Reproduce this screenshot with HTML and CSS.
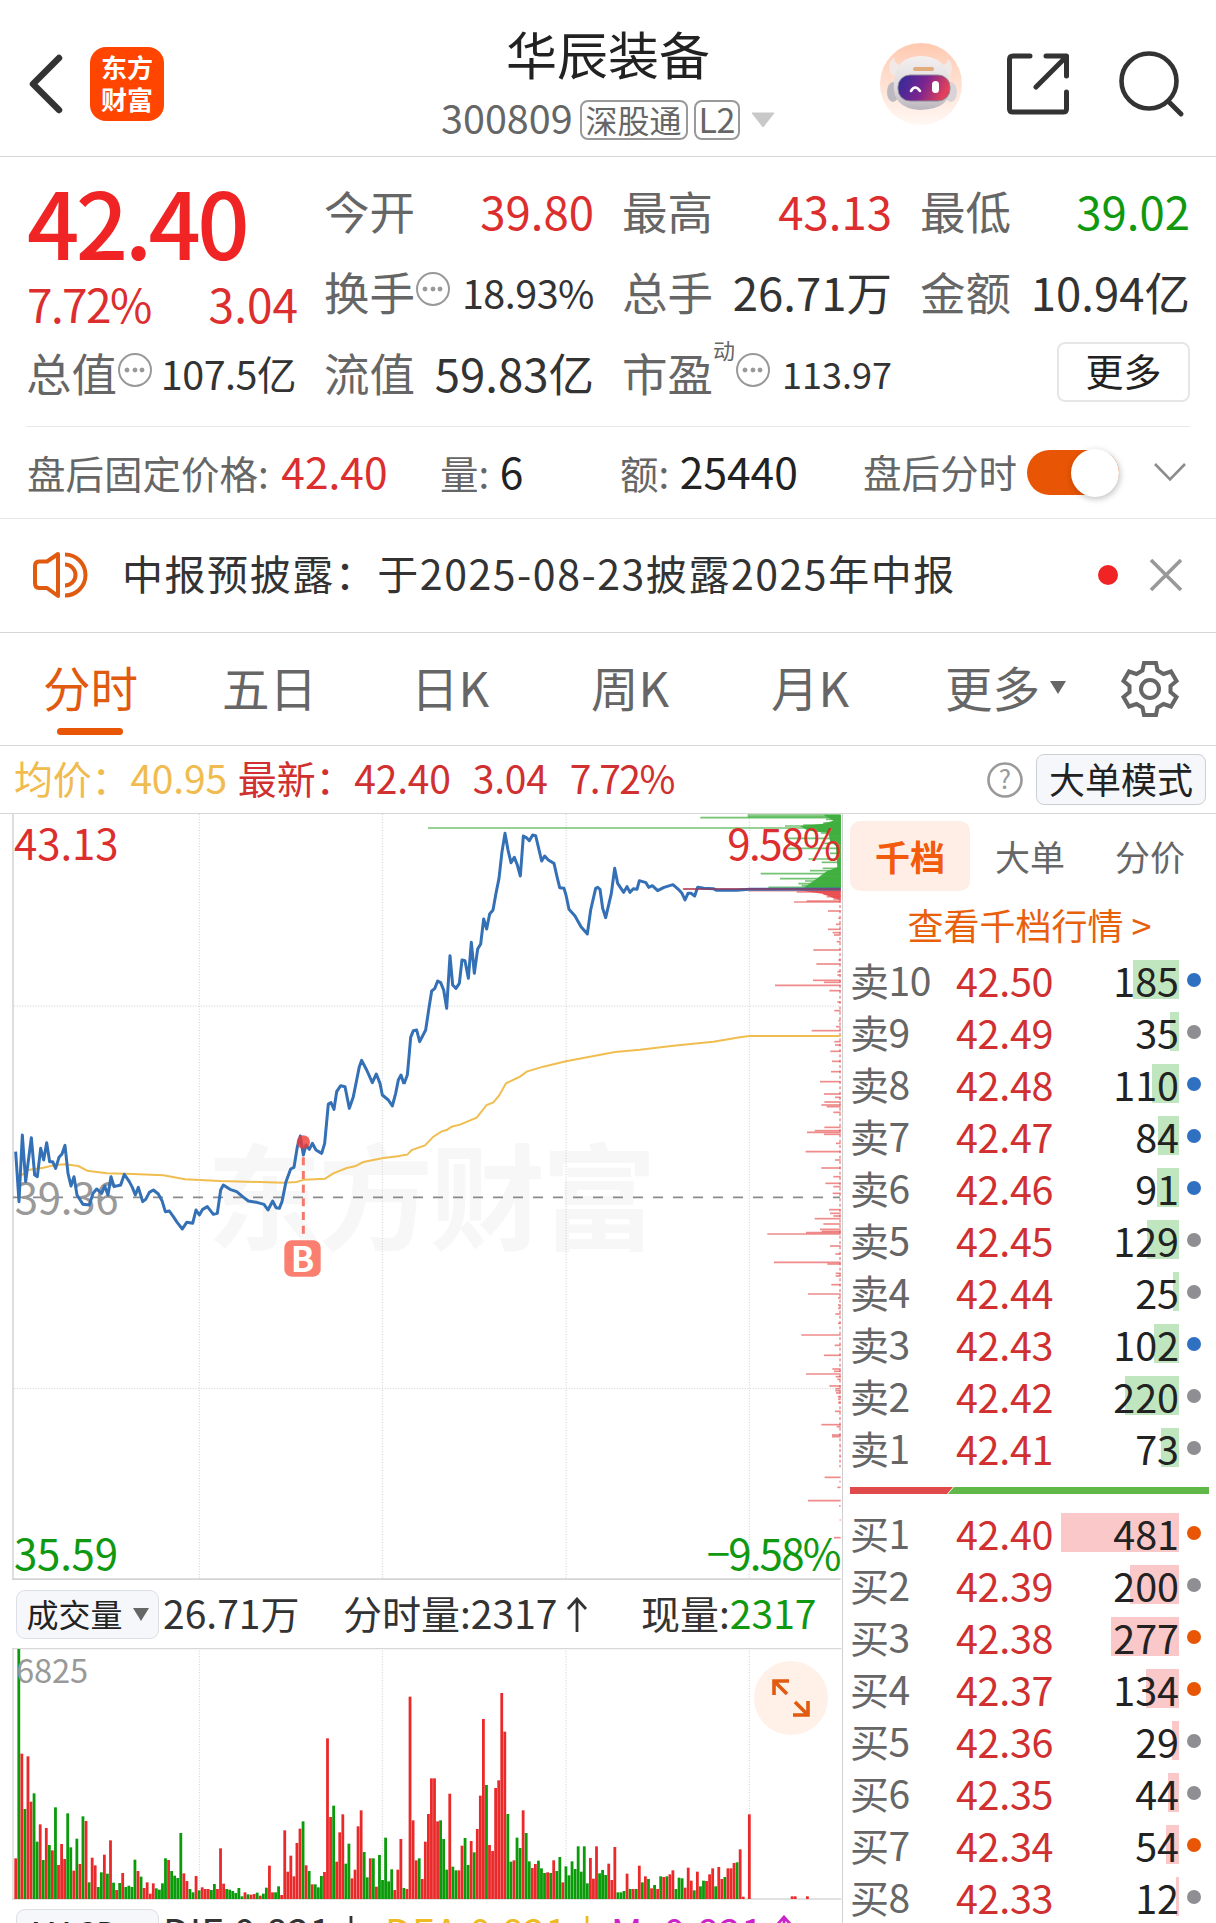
FILE: index.html
```html
<!DOCTYPE html>
<html lang="zh-CN">
<head>
    <meta charset="UTF-8">
    <meta name="viewport" content="width=device-width, initial-scale=1.0">
    <title>华辰装备 300809</title>
    <link rel="stylesheet" href="styles.css">
</head>
<body>
    <header class="topbar">
        <div class="topbar-left">
            <svg class="back" width="40" height="64" viewBox="0 0 40 64"><path d="M35 6 L9 32 L35 58" fill="none" stroke="#333" stroke-width="6.5" stroke-linecap="round" stroke-linejoin="round"/></svg>
            <div class="logo"><span>东方</span><span>财富</span></div>
        </div>
        <div class="topbar-title">
            <h1>华辰装备</h1>
            <div class="code-line">
                <span class="code">300809</span>
                <span class="badge">深股通</span>
                <span class="badge badge-l2">L2</span>
                <svg width="24" height="16" viewBox="0 0 24 16"><path d="M1 1 H23 L12 15 Z" fill="#c8c8c8" stroke="#c8c8c8" stroke-linejoin="round"/></svg>
            </div>
        </div>
        <div class="topbar-right">
            <svg width="82" height="84" viewBox="0 0 82 84">
                <defs>
                    <linearGradient id="peach" x1="0" y1="0" x2="0" y2="1"><stop offset="0" stop-color="#ffc9b0"/><stop offset="1" stop-color="#fff8f4"/></linearGradient>
                    <linearGradient id="visor" x1="0" y1="0" x2="1" y2="0.25"><stop offset="0" stop-color="#2a2c9c"/><stop offset="0.55" stop-color="#7a2490"/><stop offset="1" stop-color="#e0405a"/></linearGradient>
                    <linearGradient id="shell" x1="0" y1="0" x2="0" y2="1"><stop offset="0" stop-color="#f4f0f0"/><stop offset="0.6" stop-color="#dedadd"/><stop offset="1" stop-color="#b9b5bc"/></linearGradient>
                </defs>
                <circle cx="41" cy="42" r="41" fill="url(#peach)"/>
                <path d="M14 15 Q7 22 10 30 Q13 36 20 32 L23 24 Q14 23 14 15 Z M68 17 Q74 22 71 31 Q68 36 62 32 L59 24 Q67 24 68 17 Z" fill="#f1e9e8"/>
                <ellipse cx="13" cy="50" rx="6" ry="10" fill="#bdb9c0"/>
                <ellipse cx="71" cy="50" rx="6" ry="10" fill="#d9d3d8"/>
                <path d="M14 40 Q16 14 41 14 Q66 14 70 40 Q74 67 40 68 Q11 66 14 40 Z" fill="url(#shell)"/>
                <rect x="18" y="33" width="52" height="26" rx="12" fill="url(#visor)" stroke="#8d8798" stroke-width="1"/>
                <rect x="33" y="25" width="21" height="4" rx="2" fill="#e3ac7c"/>
                <path d="M31 49 Q35 42 40 49" fill="none" stroke="#fff" stroke-width="2.6" stroke-linecap="round"/>
                <rect x="52" y="39" width="7" height="12" rx="3.5" fill="#fff"/>
            </svg>
            <svg class="share" width="62" height="64" viewBox="0 0 62 64"><path d="M23 4 H6 Q2.500 4 2.500 7.500 V57 Q2.500 60 6 60 H56 Q59.500 60 59.500 57 V40 M39 4 H59.500 V24 M59 5 L29 35" fill="none" stroke="#333" stroke-width="5" stroke-linecap="round" stroke-linejoin="round"/></svg>
            <svg width="66" height="66" viewBox="0 0 66 66"><circle cx="30" cy="30" r="27.500" fill="none" stroke="#333" stroke-width="4.600"/><path d="M49.500 50.500 L62 63" stroke="#333" stroke-width="4.800" stroke-linecap="round"/></svg>
        </div>
    </header>

    <section class="quote">
        <div class="quote-grid">
            <div class="last">
                <div class="last-price">42.40</div>
                <div class="last-change"><span>7.72%</span><span>3.04</span></div>
            </div>
            <div class="cell"><span class="label">今开</span><span class="value up">39.80</span></div>
            <div class="cell"><span class="label">最高</span><span class="value up">43.13</span></div>
            <div class="cell"><span class="label">最低</span><span class="value down">39.02</span></div>
            <div class="cell"><span class="label">换手<i class="dots"></i></span><span class="value mid">18.93%</span></div>
            <div class="cell"><span class="label">总手</span><span class="value">26.71万</span></div>
            <div class="cell"><span class="label">金额</span><span class="value">10.94亿</span></div>
            <div class="cell"><span class="label">总值<i class="dots"></i></span><span class="value mid">107.5亿</span></div>
            <div class="cell"><span class="label">流值</span><span class="value">59.83亿</span></div>
            <div class="cell"><span class="label">市盈<sup>动</sup><i class="dots"></i></span><span class="value small">113.97</span></div>
            <div class="cell cell-more"><button class="more-btn">更多</button></div>
        </div>
        <div class="after-hours">
            <div class="ah-price">盘后固定价格: <b class="up">42.40</b></div>
            <div class="ah-vol">量: <b>6</b></div>
            <div class="ah-amount">额: <b>25440</b></div>
            <div class="ah-switch">盘后分时<span class="toggle"></span></div>
            <svg width="34" height="20" viewBox="0 0 34 20"><path d="M2 2 L17 17.500 L32 2" fill="none" stroke="#8c8c8c" stroke-width="2.600"/></svg>
        </div>
    </section>

    <section class="notice">
        <svg width="56" height="48" viewBox="0 0 56 48" fill="none" stroke="#e05a10" stroke-width="4" stroke-linejoin="round"><path d="M26 3 L15 10.500 H7 Q3 10.500 3 15 V32 Q3 37 7 37 H15 L26 45 Z"/><path d="M33 13.500 A10.500 10.500 0 0 1 33 34.500 M33 3.500 A20.500 20.500 0 0 1 33 44.500"/></svg>
        <p>中报预披露：于2025-08-23披露2025年中报</p>
        <span class="red-dot"></span>
        <svg width="34" height="34" viewBox="0 0 34 34"><path d="M2 2 L32 32 M32 2 L2 32" stroke="#999" stroke-width="3.600"/></svg>
    </section>

    <nav class="tabs">
        <a class="tab active">分时</a>
        <a class="tab">五日</a>
        <a class="tab">日K</a>
        <a class="tab">周K</a>
        <a class="tab">月K</a>
        <a class="tab tab-more">更多<i class="caret"></i></a>
        <svg class="gear" width="58" height="58" viewBox="0 0 58 58" fill="none" stroke="#666" stroke-width="4"><path d="M23 3 H35 L36.500 10.500 L42.500 14 L50 11.500 L55.500 21 L49.500 26 V32 L55.500 37 L50 46.500 L42.500 44 L36.500 47.500 L35 55 H23 L21.500 47.500 L15.500 44 L8 46.500 L2.500 37 L8.500 32 V26 L2.500 21 L8 11.500 L15.500 14 L21.500 10.500 Z"/><circle cx="29" cy="29" r="9"/></svg>
    </nav>

    <div class="price-line">
        <span class="avg">均价：<em>40.95</em></span>
        <span class="now">最新：<em>42.40</em><em>3.04</em><em class="pct">7.72%</em></span>
        <svg width="36" height="36" viewBox="0 0 36 36"><circle cx="18" cy="18" r="16.500" fill="none" stroke="#999" stroke-width="2.600"/><text x="18" y="27" text-anchor="middle" font-size="26" fill="#999">?</text></svg>
        <button class="mode-btn">大单模式</button>
    </div>

    <main class="board">
        <div class="charts">
            <!-- 3 chart units per pixel -->
            <svg class="minute-chart" width="843" height="766" viewBox="0 0 2529 2298">
                <text class="watermark" x="620" y="1280" textLength="1350">东方财富</text>
                <g class="grid">
                    <path d="M598 0 V2295 M1147 0 V2295 M1698 0 V2295 M2248 0 V2295 M42 576 H2520 M42 1724 H2520"/>
                </g>
                <path d="M39 0 V2295" stroke="#d8d8d8" stroke-width="5"/>
                <path d="M36 2296 H2522" stroke="#d4d4d4" stroke-width="6"/>
                <g id="depth"></g>
                <path d="M39 1150 H2520" class="zero-line"/>
                <g class="avg-line">
                    <polyline transform="translate(0 798)" points="57,292 85,270 130,263 165,255 195,253 235,258 262,272 320,280 400,282 490,286 555,298 660,303 780,306 850,308 890,306 912,299 975,296 1000,280 1040,264 1065,259 1090,246 1150,234 1200,228"/>
                    <polyline transform="translate(1200 -42)" points="0,1067 22,1064 35,1050 75,1036 100,1010 125,994 140,990 155,980 180,974 230,953 260,915 280,907 297,887 318,850 360,830 380,815 430,800 498,784 645,756 720,749 820,737 940,725 1020,712 1048,708 1322,708"/>
                </g>
                <text class="axis muted" x="44" y="1199" textLength="312">39.36</text>
                <g class="price-path">
                    <polyline transform="translate(0 798)" points="47,215 57,365 67,165 77,305 94,173 104,285 112,290 122,205 131,240 140,188 149,245 158,245 167,265 177,232 186,222 195,196 204,280 213,318 222,290 231,345 249,373 268,375 279,340 290,327 305,340 314,318 324,345 333,290 342,320 362,315 373,283 388,305 397,322 406,345 415,322 428,365 437,358 448,337 460,330 475,342 486,362 496,395 508,393 520,410 532,428 547,447 560,427 578,430 588,390 598,405 608,388 622,380 640,403 652,400 662,330 670,315 690,328 710,335 728,350 745,363 770,367 792,373 804,390 818,363 828,383 838,385 846,365 858,305 872,267 882,262 892,200 901,168 910,225 918,195 928,208 937,190 948,210 965,220 974,190 985,72 993,68 1002,88 1010,35 1022,17 1035,20 1048,85 1060,50 1070,0 1078,-40 1085,-59 1100,-30 1117,8 1129,-18 1140,10 1147,45 1165,60 1177,78 1187,40 1195,0 1203,-15 1212,12"/>
                    <polyline transform="translate(1200 -42)" points="12,852 22,825 27,770 32,712 40,692 50,690 59,725 77,690 86,630 95,573 104,566 113,543 122,548 131,570 140,625 150,467 158,555 168,565 178,550 186,480 195,482 205,535 214,427 223,520 233,447 242,432 251,357 260,387 269,342 279,330 288,280 297,235 306,155 315,100 324,150 333,188 343,172 352,195 361,228 370,108 379,113 388,122 398,105 407,107 416,145 425,183 434,168 445,180 462,190 471,230 479,263 492,265 498,285 507,328 525,348 543,380 562,402 572,330 587,265 593,262 600,268 608,325 617,353 634,280 644,205 653,250 671,277 681,260 690,277 700,266 711,268 718,242 738,248 746,262 757,257 773,272 792,262 819,254 835,268 846,280 855,300 864,280 873,280 884,288 893,262 912,265 940,266 950,271 1010,271 1048,268 1322,267"/>
                </g>
                <path d="M2050 225 H2522" stroke="#a03050" stroke-width="4" opacity="0.8"/>
                <path d="M910 1030 V1262" stroke="#f4786c" stroke-width="9" stroke-dasharray="24 17"/>
                <circle cx="910" cy="984" r="20" fill="#f03a34" opacity="0.8"/>
                <rect x="853" y="1279" width="109" height="109" rx="22" fill="#fb7f70"/>
                <text class="buy-mark" x="908" y="1374" text-anchor="middle">B</text>
                <text class="axis up" x="42" y="138" textLength="314">43.13</text>
                <text class="axis up" x="2182" y="138" textLength="342">9.58%</text>
                <text class="axis down" x="42" y="2268" textLength="312">35.59</text>
                <text class="axis down" x="2120" y="2268" textLength="404">−9.58%</text>
            </svg>

            <div class="vol-head">
                <button class="pill">成交量<i class="caret"></i></button>
                <span class="vol-total">26.71万</span>
                <span class="vol-minute">分时量:2317<svg width="22" height="36" viewBox="0 0 22 36"><path d="M11 35 V2 M2 12 L11 2 L20 12" fill="none" stroke="#333" stroke-width="2.800"/></svg></span>
                <span class="vol-now">现量:<em class="down">2317</em></span>
            </div>

            <div class="vol-box">
                <svg class="vol-chart" width="843" height="253" viewBox="0 0 2529 759">
                    <g class="grid"><path d="M598 0 V750 M1147 0 V750 M1698 0 V750 M2248 0 V750"/></g>
                    <path d="M36 2 H2524 M39 0 V754 M36 753 H2524" fill="none" stroke="#d8d8d8" stroke-width="4"/>
                    <g id="volume"></g>
                    <text class="vol-max" x="48" y="105" textLength="216">6825</text>
                </svg>
                <button class="expand">
                    <svg width="38" height="38" viewBox="0 0 38 38" fill="none" stroke="#e05a10" stroke-width="3.600"><path d="M2 16 V2 H17 M3 3 L15 15 M36 22 V36 H21 M35 35 L23 23"/></svg>
                </button>
            </div>

            <div class="macd-head">
                <button class="pill">MACD<i class="caret"></i></button>
                <span>DIF:0.821<svg width="20" height="36" viewBox="0 0 20 36"><path d="M10 1 V34 M2 25 L10 34 L18 25" fill="none" stroke="#333" stroke-width="2.800"/></svg></span>
                <span class="dea">DEA:0.821<svg width="20" height="36" viewBox="0 0 20 36"><path d="M10 1 V34 M2 25 L10 34 L18 25" fill="none" stroke="#eebb22" stroke-width="2.800"/></svg></span>
                <span class="m">M: 0.821<svg width="20" height="36" viewBox="0 0 20 36"><path d="M10 35 V2 M2 11 L10 2 L18 11" fill="none" stroke="#cc22cc" stroke-width="2.800"/></svg></span>
            </div>
        </div>

        <aside class="book">
            <div class="book-tabs">
                <a class="active">千档</a>
                <a>大单</a>
                <a>分价</a>
            </div>
            <a class="book-link">查看千档行情 &gt;</a>
            <div id="sells"></div>
            <svg class="ratio" width="359" height="7" viewBox="0 0 359 7"><path d="M0 0 H103 L97 7 H0 Z" fill="#e04a4a"/><path d="M104 0 H359 V7 H98 Z" fill="#5fb848"/></svg>
            <div id="buys"></div>
        </aside>
    </main>

    <script>
        // [level, price, volume, dot colour]
        const sells = [
            ['卖10', '42.50', 185, 'blue'], ['卖9', '42.49', 35, 'gray'], ['卖8', '42.48', 110, 'blue'],
            ['卖7', '42.47', 84, 'blue'], ['卖6', '42.46', 91, 'blue'], ['卖5', '42.45', 129, 'gray'],
            ['卖4', '42.44', 25, 'gray'], ['卖3', '42.43', 102, 'blue'], ['卖2', '42.42', 220, 'gray'],
            ['卖1', '42.41', 73, 'gray']
        ];
        const buys = [
            ['买1', '42.40', 481, 'orange'], ['买2', '42.39', 200, 'gray'], ['买3', '42.38', 277, 'orange'],
            ['买4', '42.37', 134, 'orange'], ['买5', '42.36', 29, 'gray'], ['买6', '42.35', 44, 'gray'],
            ['买7', '42.34', 54, 'orange'], ['买8', '42.33', 12, 'gray']
        ];

        function renderBook(id, rows, side) {
            document.getElementById(id).innerHTML = rows.map(([level, price, vol, dot]) => `
                <div class="book-row">
                    <span class="level">${level}</span>
                    <span class="price">${price}</span>
                    <span class="vol ${side}"><i style="width:${Math.round(vol * 0.246)}px"></i><b>${vol}</b></span>
                    <span class="dot ${dot}"></span>
                </div>`).join('');
        }
        renderBook('sells', sells, 'sell');
        renderBook('buys', buys, 'buy');

        // Resting orders by price: [y, length]
        const asks = [[3,279],[8,279],[11,421],[16,44],[27,52],[33,112],[36,167],[42,1238],[46,82],[51,82],[57,60],[62,42],[73,162],[81,32],[88,52],[103,162],[118,32],[135,97],[145,57],[163,54],[170,92],[179,240],[194,182],[201,107],[209,127],[215,117],[220,217]];
        const bids = [[225,474],[230,277],[234,132],[241,52],[248,42],[255,22],[261,102],[264,140],[291,38],[313,7],[331,14],[346,38],[356,24],[363,20],[383,12],[408,82],[438,7],[450,73],[473,10],[483,10],[499,83],[505,50],[514,197],[530,34],[564,10],[590,19],[620,7],[638,14],[650,87],[683,19],[693,17],[712,31],[742,26],[773,29],[803,62],[840,50],[850,17],[864,49],[873,58],[878,42],[895,22],[940,49],[950,78],[955,101],[961,50],[988,14],[1013,105],[1038,17],[1062,58],[1088,22],[1108,46],[1118,22],[1138,24],[1187,35],[1198,32],[1206,22],[1214,78],[1230,52],[1246,62],[1252,57],[1256,104],[1260,220],[1296,32],[1320,16],[1345,200],[1350,40],[1378,15],[1386,15],[1412,28],[1440,98],[1452,8],[1473,8],[1483,8],[1500,16],[1528,8],[1563,118],[1594,18],[1624,50],[1665,25],[1672,20],[1680,104],[1688,15],[1696,10],[1716,34],[1724,16],[1730,16],[1737,14],[1748,9],[1756,8],[1766,8],[1792,17],[1832,58],[1838,12],[1863,26],[1868,26],[1898,3],[1928,3],[1990,48],[2003,4],[2020,10],[2060,98],[2076,5],[2118,3],[2171,20]];
        const depthBar = (color, opacity) => ([y, len]) =>
            `<path d="M${2522 - len} ${y} H2522" stroke="${color}" stroke-width="5" opacity="${opacity}"/>`;
        document.getElementById('depth').innerHTML =
            '<path d="M2520 3 V222" stroke="#3fb03f" stroke-width="5"/>' +
            '<path d="M2520 225 V1960" stroke="#e06060" stroke-width="3" stroke-dasharray="9 7"/>' +
            // the dense part on both sides of the last price
            '<path d="M2522 2 H2470 L2500 20 L2465 30 L2400 36 L2425 50 L2485 56 L2490 80 L2508 96 L2512 160 L2480 172 L2450 194 L2430 208 L2410 222 H2522 Z" fill="#43b243"/>' +
            '<path d="M2522 226 H2380 L2470 240 L2500 252 L2522 258 Z" fill="#ee5c5c"/>' +
            asks.map(depthBar('#3fae3f', 0.72)).join('') + bids.map(depthBar('#e64545', 0.62)).join('');

        // One bar a minute, r = up, g = down
        const volumes = ('r122 g750 r436 g270 r428 r292 g317 g172 r224 g117 r213 g162 r146 g275 r102 r165 r120 g257 g155 r85 ' +
            'g181 r105 g248 r234 g50 r124 r101 g36 g80 r133 g76 r176 g49 r27 g48 r78 g36 g40 g36 g118 ' +
            'r84 g67 r33 r50 r16 r47 g32 g28 g47 g122 r117 g84 g70 g63 g198 r77 r54 g30 g20 r69 ' +
            'g26 r35 r30 r30 g27 g45 r30 r152 r46 g30 g28 g24 g18 g33 g8 r20 g14 r13 r15 g19 ' +
            'r10 g16 g34 r100 r20 g20 g38 r12 r206 r82 r130 r68 r168 r211 g233 r101 g84 r44 g44 g35 ' +
            'g69 r81 r482 r246 g280 r112 r200 r254 g106 g166 r62 r88 r218 r266 g141 g65 r122 g122 r37 g132 ' +
            'g57 g184 g53 g89 r27 r88 r180 g33 r30 r607 r236 r116 g122 r60 r172 r255 r362 r362 r233 g236 ' +
            'g180 g88 r316 g97 g86 r86 r160 g183 g102 r174 g140 r210 r310 r540 g342 r162 r144 r333 r356 r618 ' +
            'r502 g255 g112 r116 g184 g153 r266 g198 g113 r93 r105 g115 g92 g78 r80 g78 r116 g84 g126 r50 ' +
            'g98 g71 g113 g90 g158 g82 g158 g47 r123 r61 r158 g77 g87 g72 r106 r57 r156 g20 g20 g24 ' +
            'r76 g30 r30 g30 r100 g50 r68 g60 r32 g42 r30 g68 r66 g68 r74 r86 g30 g64 g62 r34 ' +
            'r94 r55 g26 r82 g38 g55 r54 r74 r92 g38 r96 r60 g66 r92 r92 r108 g110 r149 r7 r0 ' +
            'r254 r0 r0 r0 r0 r0 r0 r0 r0 r0 r0 r0 r0 r0 r8 r8 r0 r0 r0 r8').split(' ');
        document.getElementById('volume').innerHTML = volumes.map((v, i) => {
            const h = Number(v.slice(1));
            const fill = v[0] === 'r' ? '#ea2a2a' : '#0a9a0a';
            return `<rect x="${(43 + i * 9.17).toFixed(1)}" y="${753 - h}" width="8.4" height="${h}" fill="${fill}"/>`;
        }).join('');
    </script>
</body>
</html>
```
FILE: styles.css
```css
* {
    margin: 0;
    padding: 0;
    box-sizing: border-box;
}

body {
    width: 1216px;
    height: 1923px;
    overflow: hidden;
    background: #fff;
    color: #333;
    font-family: "Noto Sans CJK SC", "Noto Sans", sans-serif;
    line-height: 1;
}

button {
    font-family: inherit;
    line-height: 1;
    color: #222;
}

i,
em,
b {
    font-style: normal;
    font-weight: 400;
}

.up { color: #dc2e2e; }
.down { color: #109910; }

/* Top bar */
.topbar {
    display: grid;
    grid-template-columns: 1fr auto 1fr;
    height: 157px;
    border-bottom: 1px solid #d6d6d6;
}

.topbar-left {
    display: flex;
    align-items: center;
    padding: 12px 0 0 24px;
    gap: 26px;
}

.logo {
    display: flex;
    flex-direction: column;
    align-items: center;
    justify-content: center;
    width: 74px;
    height: 74px;
    border-radius: 16px;
    background: #ff4500;
    color: #fff;
    font-size: 26px;
    line-height: 32px;
    font-weight: 700;
    padding-bottom: 3px;
}

.topbar-title {
    display: flex;
    flex-direction: column;
    align-items: center;
    padding-top: 28px;
}

.topbar-title h1 {
    font-size: 51px;
    font-weight: 400;
    color: #222;
}

.code-line {
    display: flex;
    align-items: center;
    margin-top: 21px;
    color: #666;
}

.code {
    font-size: 39.500px;
    line-height: 40px;
    margin-top: -6px;
}

.badge {
    height: 40px;
    margin-left: 7px;
    padding: 1px 4px;
    border: 2px solid #999;
    border-radius: 8px;
    font-size: 32px;
    line-height: 32px;
}

.badge-l2 {
    margin-left: 6px;
    padding: 1px 3px;
    letter-spacing: -0.500px;
    font-size: 34px;
}

.code-line svg {
    margin-left: 11px;
}

.topbar-right {
    display: flex;
    justify-content: flex-end;
    align-items: center;
    padding: 12px 31px 0 0;
}

.topbar-right .share {
    margin: 0 50px 0 45px;
}

/* Quote */
.quote {
    border-bottom: 1px solid #e8e8e8;
}

.quote-grid {
    display: grid;
    grid-template-columns: repeat(4, 270px);
    grid-template-rows: repeat(3, 81px);
    justify-content: space-between;
    margin: 0 26px;
    height: 270px;
    padding-top: 13px;
    border-bottom: 1px solid #e8e8e8;
}

.last {
    grid-row: span 2;
    color: #f02424;
}

.last-price {
    font-size: 92px;
    font-weight: 500;
    letter-spacing: -3.600px;
    line-height: 100px;
    margin-left: 1px;
}

.last-change {
    display: flex;
    justify-content: space-between;
    padding: 10px 0 0 1px;
    font-size: 46px;
    color: #dc2e2e;
}

.last-change span:first-child {
    letter-spacing: -1.600px;
}

.last-change span:last-child {
    margin-right: -2px;
}

.cell {
    display: flex;
    justify-content: space-between;
    align-items: center;
}

.label {
    display: flex;
    align-items: center;
    font-size: 45.500px;
    color: #666;
}

.label sup {
    align-self: flex-start;
    margin-top: -12px;
    font-size: 22px;
}

.dots {
    width: 34px;
    height: 34px;
    margin: -5px 0 0 1px;
    border: 2.500px solid #999;
    border-radius: 50%;
    background: radial-gradient(circle, #999 2px, transparent 2.800px) center / 8px 8px no-repeat, radial-gradient(circle, #999 2px, transparent 2.800px) 3px center / 8px 8px no-repeat, radial-gradient(circle, #999 2px, transparent 2.800px) 18px center / 8px 8px no-repeat;
}

.value {
    font-size: 45.500px;
}

.value.mid {
    font-size: 39.500px;
    letter-spacing: -0.500px;
}

.value.small {
    font-size: 36px;
}

.cell-more {
    justify-content: flex-end;
}

.more-btn {
    width: 133px;
    height: 60px;
    margin-top: -2px;
    padding-bottom: 4px;
    border: 2px solid #e6e6e6;
    border-radius: 8px;
    background: #fff;
    font-size: 38px;
}

.after-hours {
    display: grid;
    grid-template-columns: 413px 180px 243px 290px 34px;
    align-items: center;
    height: 91px;
    padding: 0 30px 2px 27px;
    font-size: 38.500px;
    color: #666;
}

.after-hours b {
    margin-left: 2px;
    font-size: 42.500px;
    color: #222;
}

.after-hours b.up {
    margin-left: 4px;
    color: #dc2e2e;
}

.ah-switch {
    display: flex;
    align-items: center;
}

.toggle {
    position: relative;
    width: 92px;
    height: 45px;
    margin: 1px 0 0 10px;
    border-radius: 23px;
    background: #e85504;
}

.toggle::after {
    content: "";
    position: absolute;
    top: -1px;
    right: 0;
    width: 48px;
    height: 48px;
    border-radius: 50%;
    background: #fff;
    box-shadow: 1px 2px 6px rgba(0,0,0,0.25);
}

/* Notice */
.notice {
    display: flex;
    align-items: center;
    height: 114px;
    padding: 0 33px 2px 32px;
    border-bottom: 1px solid #d6d6d6;
}

.notice p {
    flex: 1;
    margin: -5px 0 0 34px;
    font-size: 41px;
    letter-spacing: 1.550px;
    white-space: nowrap;
}

.red-dot {
    width: 20px;
    height: 20px;
    margin-right: 31px;
    border-radius: 50%;
    background: #f02424;
}

/* Period tabs */
.tabs {
    display: grid;
    grid-template-columns: 179px 189px 180px 180px 174px 176px 58px;
    align-items: center;
    height: 113px;
    padding-left: 43px;
    border-bottom: 1px solid #d6d6d6;
}

.tab {
    position: relative;
    display: flex;
    align-items: center;
    font-size: 47.500px;
    line-height: 60px;
    padding-bottom: 4px;
    color: #666;
    white-space: nowrap;
}

.tab.active {
    color: #e05a10;
}

.tab.active::after {
    content: "";
    position: absolute;
    left: 14px;
    bottom: -14px;
    width: 66px;
    height: 7px;
    border-radius: 4px;
    background: #e85504;
}

.caret {
    margin-left: 10px;
    border: 8px solid transparent;
    border-top: 13px solid #666;
    border-bottom: 0;
}

/* Average and latest price */
.price-line {
    display: flex;
    align-items: center;
    height: 68px;
    padding: 0 10px 0 14px;
    border-bottom: 1px solid #d6d6d6;
    font-size: 39px;
}

.price-line .avg,
.price-line .now {
    margin-top: -4px;
}

.price-line .avg {
    letter-spacing: -0.200px;
    color: #f0bc50;
}

.price-line .now {
    flex: 1;
    margin-left: 11px;
    letter-spacing: -0.200px;
    color: #d03030;
}

.now em + em {
    margin-left: 22px;
}

.now .pct {
    letter-spacing: -1.500px;
}

.mode-btn {
    width: 170px;
    height: 51px;
    margin-left: 13px;
    padding-bottom: 3px;
    border: 1px solid #ccd0d4;
    border-radius: 8px;
    background: #f6f7fa;
    font-size: 36px;
}

/* Charts */
.board {
    display: flex;
}

.charts {
    width: 843px;
    border-right: 1px solid #d0d0d0;
    height: 1109px;
    overflow: hidden;
}

.charts svg {
    display: block;
}

.grid path {
    fill: none;
    stroke: #cfcfcf;
    stroke-width: 3;
    stroke-dasharray: 3 5;
}

.zero-line {
    stroke: #8a8a8a;
    stroke-width: 5;
    stroke-dasharray: 30 30;
}

.avg-line {
    fill: none;
    stroke: #f0bd50;
    stroke-width: 6;
}

.price-path {
    fill: none;
    stroke: #3470b5;
    stroke-width: 9;
    stroke-linejoin: round;
}

.watermark {
    font-size: 345px;
    font-weight: 700;
    fill: #f7f7f7;
}

.axis {
    font-size: 126px;
}

.axis.up { fill: #dc2e2e; }
.axis.down { fill: #109910; }
.axis.muted { fill: #999; }

.buy-mark {
    font-size: 104px;
    font-weight: 700;
    fill: #fff;
}

.vol-head,
.macd-head {
    display: flex;
    align-items: center;
    height: 68px;
    padding-left: 16px;
    font-size: 39px;
}

.pill {
    display: flex;
    align-items: center;
    justify-content: center;
    width: 143px;
    height: 49px;
    margin-right: 4px;
    padding-bottom: 3px;
    border: 1px solid #dcdfe6;
    border-radius: 9px;
    background: #f6f7fa;
    font-size: 32px;
}

.pill .caret {
    margin-top: 3px;
}

.vol-head span,
.macd-head span {
    display: flex;
    align-items: center;
    padding-bottom: 4px;
    white-space: nowrap;
}

.vol-total {
    width: 180px;
}

.vol-minute {
    width: 298px;
}

.vol-minute svg {
    margin: 6px 0 0 9px;
}

.vol-box {
    position: relative;
    height: 253px;
}

.vol-max {
    font-size: 98px;
    fill: #999;
}

.expand {
    position: absolute;
    left: 754px;
    top: 13px;
    display: flex;
    align-items: center;
    justify-content: center;
    width: 74px;
    height: 74px;
    border: 0;
    border-radius: 50%;
    background: #fff0e8;
}

.macd-head {
    height: 64px;
}

.macd-head svg {
    margin: 4px 0 0 10px;
}

.macd-head .dea {
    margin-left: 24px;
    color: #eebb22;
}

.macd-head .m {
    margin-left: 14px;
    letter-spacing: 0.500px;
    color: #cc22cc;
}

/* Order book */
.book {
    width: 373px;
    padding: 7px 7px 0 7px;
}

.book-tabs {
    display: grid;
    grid-template-columns: repeat(3, 120px);
    height: 70px;
    font-size: 35px;
    line-height: 70px;
    text-align: center;
    color: #666;
}

.book-tabs .active {
    border-radius: 10px;
    background: #ffeee6;
    color: #f25a0c;
    font-weight: 700;
}

.book-link {
    display: block;
    height: 62px;
    font-size: 36px;
    line-height: 66px;
    text-align: center;
    color: #e8600c;
}

.book-row {
    display: grid;
    grid-template-columns: 106px 102px 122px 30px;
    align-items: center;
    height: 52px;
    padding-top: 1px;
    font-size: 39.500px;
    line-height: 39px;
}

.level {
    color: #666;
    letter-spacing: -0.500px;
    font-size: 39px;
}

.price {
    color: #d03030;
    letter-spacing: -0.300px;
}

.vol {
    position: relative;
    height: 39px;
    margin-right: 1px;
    text-align: right;
}

.vol i {
    position: absolute;
    right: 0;
    top: 0;
    height: 39px;
}

.vol b {
    position: relative;
    color: #222;
}

.vol.sell i { background: #c0e6c0; }
.vol.buy i { background: #fac8c8; }

.dot {
    width: 14px;
    height: 14px;
    margin-left: 7px;
    border-radius: 50%;
}

.dot.blue { background: #3070c0; }
.dot.gray { background: #8e8e93; }
.dot.orange { background: #e85504; }

.ratio {
    display: block;
    margin: 14px 0 12px 0;
}
```
